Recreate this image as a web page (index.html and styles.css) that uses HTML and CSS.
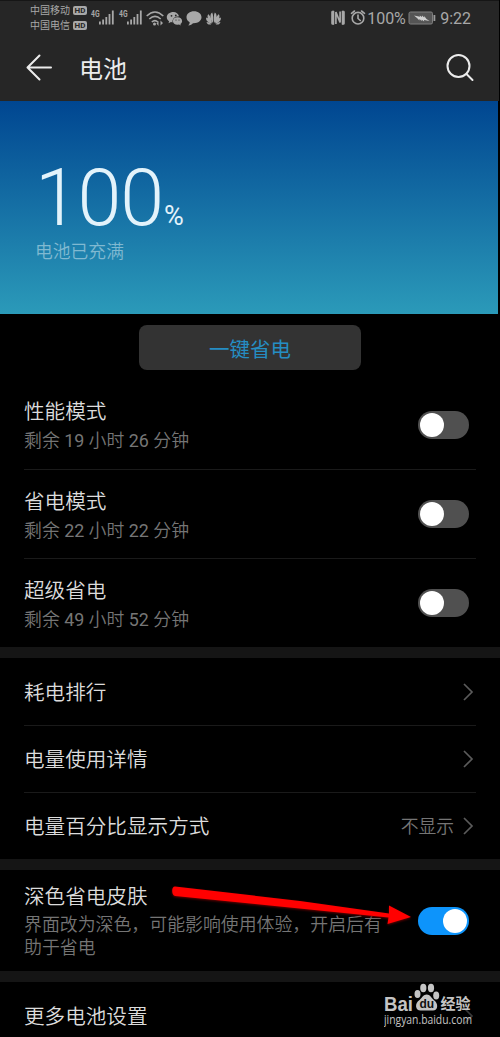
FILE: index.html
```html
<!DOCTYPE html>
<html lang="zh-CN">
<head>
<meta charset="utf-8">
<title>电池</title>
<link rel="stylesheet" href="styles.css">
</head>
<body>
<div class="screen">
  <header class="top">
    <div class="status">
      <div class="carriers">
        <div class="carrier">中国移动<span class="hd">HD</span></div>
        <div class="carrier">中国电信<span class="hd">HD</span></div>
      </div>
      <svg class="status-left" width="134" height="24" viewBox="0 0 134 24" fill="#a8a8a8">
        <text class="net" x="1" y="14" textLength="8.500" lengthAdjust="spacingAndGlyphs">4G</text>
        <path d="M9 18.500h1.800v3H9zM12.200 16.500h1.800v5h-1.800zM15.400 14h1.800v7.500h-1.800zM18.600 11h1.800v10.500h-1.800zM21.900 7.500h1.800v14h-1.800z"/>
        <text class="net" x="29" y="14" textLength="8.500" lengthAdjust="spacingAndGlyphs">4G</text>
        <path d="M37 18.500h1.800v3h-1.800zM40.200 16.500h1.800v5h-1.800zM43.400 14h1.800v7.500h-1.800zM46.600 11h1.800v10.500h-1.800zM49.900 7.500h1.800v14h-1.800z"/>
        <g transform="translate(0 2)">
        <g fill="none" stroke="#a8a8a8" stroke-width="1.600"><path d="M56.700 11q8.300-8 16.600 0M59.300 14q5.700-5.200 11.400 0M61.800 17q3.200-2.700 6 0"/></g>
        <circle cx="64.500" cy="19" r="1.500"/><path d="M68.500 16v5l-2-2.500zM70.500 15.500v5l2.500-2.500z"/>
        <path d="M83.500 7c-4 0-6.700 2.400-6.700 5.300 0 1.700.9 3 2.300 4l-.6 2 2.500-1.200 1.500.3C82.300 14 84.500 11.500 89 11.300 88.300 8.800 86.200 7 83.500 7z"/>
        <path d="M87.500 12.200c-2.800 0-4.600 1.700-4.600 3.800s1.900 3.800 4.600 3.800l1.500-.2 1.800 1-.4-1.600c1-.7 1.700-1.800 1.700-3 0-2.100-2-3.800-4.600-3.800z"/>
        <g fill="#262626"><circle cx="81.500" cy="10.800" r=".9"/><circle cx="85.800" cy="10.500" r=".9"/><circle cx="86" cy="15" r=".6"/><circle cx="89" cy="15" r=".6"/></g>
        <path d="M104 6.300c-4.200 0-7.500 2.500-7.500 6 0 2.300 1.300 4 3.200 5-.1 1.500-.7 2.500-1.400 3.100 2.200-.1 3.800-1 4.700-2.200 5 .3 8.500-2.300 8.500-5.900 0-3.500-3.300-6-7.500-6z"/>
        <g transform="translate(123.500 18)">
          <path d="M-.5 0C-3.500-4-4-9-1.300-10.500-.1-8.500-.2-4-.5 0z"/>
          <path d="M-1.300.200C-5.500-3-7-6-5.300-8.700-3.200-7.500-1.900-3.500-1.300.2zM-1.800.800C-6-.6-8-3-7.300-5.500-5-4.800-3.200-2.500-1.800.8zM-2.200 1.500C-5 2-6.500.9-7-1-5-.9-3.500.1-2.200 1.500z"/>
          <path d="M.5 0C3.500-4 4-9 1.300-10.500.1-8.500.2-4 .5 0zM1.300.200C5.500-3 7-6 5.300-8.700 3.200-7.500 1.900-3.500 1.300.2zM1.800.800C6-.6 8-3 7.300-5.500 5-4.800 3.200-2.500 1.800.8zM2.200 1.500C5 2 6.500.9 7-1 5-.9 3.500.1 2.200 1.500z"/>
        </g>
        </g>
      </svg>
      <div class="status-right">
        <svg width="36" height="18" viewBox="0 0 36 18">
          <path d="M4 2H2.500Q1.500 2 1.500 3v11.500q0 1 1 1H4zM12 2h1.500q1 0 1 1v11.500q0 1-1 1H12z" fill="#a8a8a8" stroke="#a8a8a8" stroke-width=".6"/>
          <path d="M5.900 15V3l4.200 10.500V2.500" fill="none" stroke="#a8a8a8" stroke-width="1.700"/>
          <g fill="none" stroke="#a8a8a8" stroke-width="1.600" stroke-linecap="round"><circle cx="28" cy="9.200" r="5.800"/><path d="M28 6v3.500l2.300 2M21.500 4.300 24.500 2M31.500 2l3 2.300"/></g>
        </svg>
        <span class="pct">100%</span>
        <svg width="28" height="14" viewBox="0 0 28 14">
          <rect x="1" y="1" width="23.500" height="12" rx="1.500" fill="#555" stroke="#808080"/>
          <path d="M25.500 4h1.800v6h-1.800z" fill="#9a9a9a"/>
          <path d="m6 4.500 6 1.200-.3-1.200 2.300 1.500V4.400l2.200 2.200V5l2.300 3 3 2-5.500-1 .2 1.400-2.400-1.700V10L11.400 8v1.500L9 7z" fill="#d0d0d0"/>
        </svg>
        <span class="clock">9:22</span>
      </div>
    </div>
    <div class="titlebar">
      <svg width="27" height="28" viewBox="0 0 27 28" fill="none" stroke="#ececec" stroke-width="2" stroke-linecap="round" stroke-linejoin="round"><path d="M25 13.500H1.500M13.500 1.500 1.500 13.500l12 12"/></svg>
      <h1 class="title">电池</h1>
      <svg class="search" width="28" height="28" viewBox="0 0 28 28" fill="none" stroke="#ececec" stroke-width="2" stroke-linecap="round"><circle cx="12.500" cy="12" r="11"/><path d="m20.500 20 6 6"/></svg>
    </div>
  </header>

  <section class="hero">
    <div class="level">100<span class="unit">%</span></div>
    <div class="state">电池已充满</div>
  </section>

  <div class="action"><button class="save">一键省电</button></div>

  <section class="group">
    <div class="row mode"><div><div class="name">性能模式</div><div class="note">剩余 <b>19</b> 小时 <b>26</b> 分钟</div></div><span class="toggle"></span></div>
    <div class="row mode"><div><div class="name">省电模式</div><div class="note">剩余 <b>22</b> 小时 <b>22</b> 分钟</div></div><span class="toggle"></span></div>
    <div class="row mode"><div><div class="name">超级省电</div><div class="note">剩余 <b>49</b> 小时 <b>52</b> 分钟</div></div><span class="toggle"></span></div>
  </section>

  <section class="group">
    <div class="row link"><div class="name">耗电排行</div><svg class="chev" width="12" height="20" viewBox="0 0 12 20"><path d="m2 2 8 8-8 8"/></svg></div>
    <div class="row link"><div class="name">电量使用详情</div><svg class="chev" width="12" height="20" viewBox="0 0 12 20"><path d="m2 2 8 8-8 8"/></svg></div>
    <div class="row link"><div class="name">电量百分比显示方式</div><span class="value">不显示</span><svg class="chev" width="12" height="20" viewBox="0 0 12 20"><path d="m2 2 8 8-8 8"/></svg></div>
  </section>

  <section class="group">
    <div class="row skin"><div><div class="name">深色省电皮肤</div><div class="note">界面改为深色，可能影响使用体验，开启后有<br>助于省电</div></div><span class="toggle on"></span></div>
  </section>

  <section class="group">
    <div class="row more"><div class="name">更多电池设置</div><svg class="chev" width="12" height="20" viewBox="0 0 12 20"><path d="m2 2 8 8-8 8"/></svg></div>
  </section>

  <svg class="arrow" width="250" height="50" viewBox="0 0 250 50"><path d="M5 7.500Q2.200 7.500 2.200 12q.2 4.500 3 5L218.500 38.500 217.500 45 241 38 219 26.500V34.500L130 22z" fill="#f00"/></svg>

  <div class="mark">
    <svg width="96" height="46" viewBox="0 0 96 46" fill="#c4c4c4">
      <text class="bai" x="0" y="27.500" textLength="29" lengthAdjust="spacingAndGlyphs">Bai</text>
      <g transform="translate(29.500 0)"><ellipse cx="4" cy="11" rx="3" ry="4"/><ellipse cx="9.800" cy="5" rx="3.100" ry="4.200"/><ellipse cx="17.500" cy="5" rx="3.100" ry="4.200"/><ellipse cx="22.700" cy="12.500" rx="3" ry="3.900"/><path d="M13.300 11.500c-3.500 0-4.500 3-7 5.200C.5 20.500 2 27.500 7 27.500h12.500c5 0 6-7 .5-10.800-2.500-2.200-3.500-5.200-6.700-5.200z"/><text class="du" x="6" y="25">du</text></g>
      <text class="jy" x="56.500" y="26">经验</text>
      <text class="site" x="0" y="41" textLength="88" lengthAdjust="spacingAndGlyphs">jingyan.baidu.com</text>
    </svg>
  </div>
</div>
</body>
</html>
```
FILE: styles.css
```css
* { box-sizing: border-box; }
body { margin: 0; background: #000; font-family: Roboto, "Noto Sans CJK SC", sans-serif; }
.screen { position: relative; width: 500px; height: 1037px; overflow: hidden; background: #000; }

.top { width: 499px; height: 101px; background: #262626; border-top: 1px solid #161616; }
.status { display: flex; height: 34px; padding: 2px 28px 0 30px; color: #a8a8a8; }
.carriers { width: 60px; }
.carrier { display: flex; align-items: center; height: 15px; font-size: 10px; line-height: 15px; white-space: nowrap; }
.hd { width: 14px; height: 9px; margin-left: 3px; border-radius: 2px; background: #a8a8a8; color: #262626; font-size: 8px; font-weight: 700; line-height: 9px; text-align: center; }
.status-left { flex: none; }
.net { font-size: 8.500px; font-weight: 700; }
.status-right { display: flex; align-items: center; height: 30px; margin-left: auto; white-space: nowrap; }
.pct { width: 41px; margin-left: 1px; font-size: 16px; }
.clock { margin-left: 4px; font-size: 16px; }
.titlebar { display: flex; align-items: center; height: 66px; padding: 0 25px 0 26px; }
.title { margin: 3px 0 0 26px; color: #ececec; font-size: 24px; font-weight: 400; line-height: 34px; }
.search { margin-left: auto; }

.hero { width: 498px; height: 213px; padding: 53px 0 0 35px; background: linear-gradient(#004691, #2b9ab9); }
.level { height: 86px; color: #e3f3fb; font-size: 79px; font-weight: 300; line-height: 88px; letter-spacing: -1.200px; }
.unit { margin-left: 1px; font-size: 27px; font-weight: 400; line-height: 27px; letter-spacing: 0; }
.state { height: 24px; color: #80b9d1; font-size: 17.800px; font-weight: 350; line-height: 24px; }

.action { display: flex; justify-content: center; height: 66px; padding-top: 11px; }
.save { width: 222px; height: 45px; padding: 0; border: 0; border-radius: 8px; background: #333; color: #258ec3; font: 400 20.500px Roboto, "Noto Sans CJK SC", sans-serif; }

.group + .group { border-top: 11px solid #151515; }
.row { display: flex; align-items: center; margin: 0 24px; }
.row + .row { border-top: 1px solid #1a1a1a; }
.name { color: #dcdcdc; font-size: 20.600px; font-weight: 350; line-height: 32px; white-space: nowrap; }
.note { color: #757575; font-size: 17.900px; font-weight: 350; line-height: 23px; white-space: nowrap; }
.note b { font-weight: 400; }
.mode { height: 89px; }
.mode .name { height: 32px; line-height: 31px; }
.toggle { flex: none; width: 51px; height: 28px; margin: 0 7px 0 auto; padding: 2px; border-radius: 14px; background: #505050; }
.toggle::before { content: ""; display: block; width: 24px; height: 24px; border-radius: 50%; background: #fff; }
.toggle.on { background: #0d94fb; }
.toggle.on::before { margin-left: auto; }
.link { height: 67px; }
.link .name, .more .name { padding-top: 2px; }
.value { margin-left: auto; padding-top: 2px; color: #757575; font-size: 17.800px; font-weight: 350; line-height: 24px; }
.chev { flex: none; margin-left: auto; margin-right: 2px; fill: none; stroke: #5b5b5b; stroke-width: 1.700; }
.value + .chev { margin-left: 8px; }
.skin { height: 101px; }
.skin .name { height: 31px; line-height: 30px; }
.skin .note { line-height: 23.500px; }
.more { height: 68px; }
.more .chev { stroke: #383838; }

.arrow { position: absolute; left: 170px; top: 879px; filter: drop-shadow(0 1px 1px #600); }
.mark { position: absolute; left: 384px; top: 983px; }
.bai { font: 700 19.500px "Liberation Sans", sans-serif; }
.jy { font: 700 15px "Noto Sans CJK SC", sans-serif; }
.du { fill: #111; font: 700 12px "Liberation Sans", sans-serif; }
.site { font: 12px "Open Sans", sans-serif; }
```
